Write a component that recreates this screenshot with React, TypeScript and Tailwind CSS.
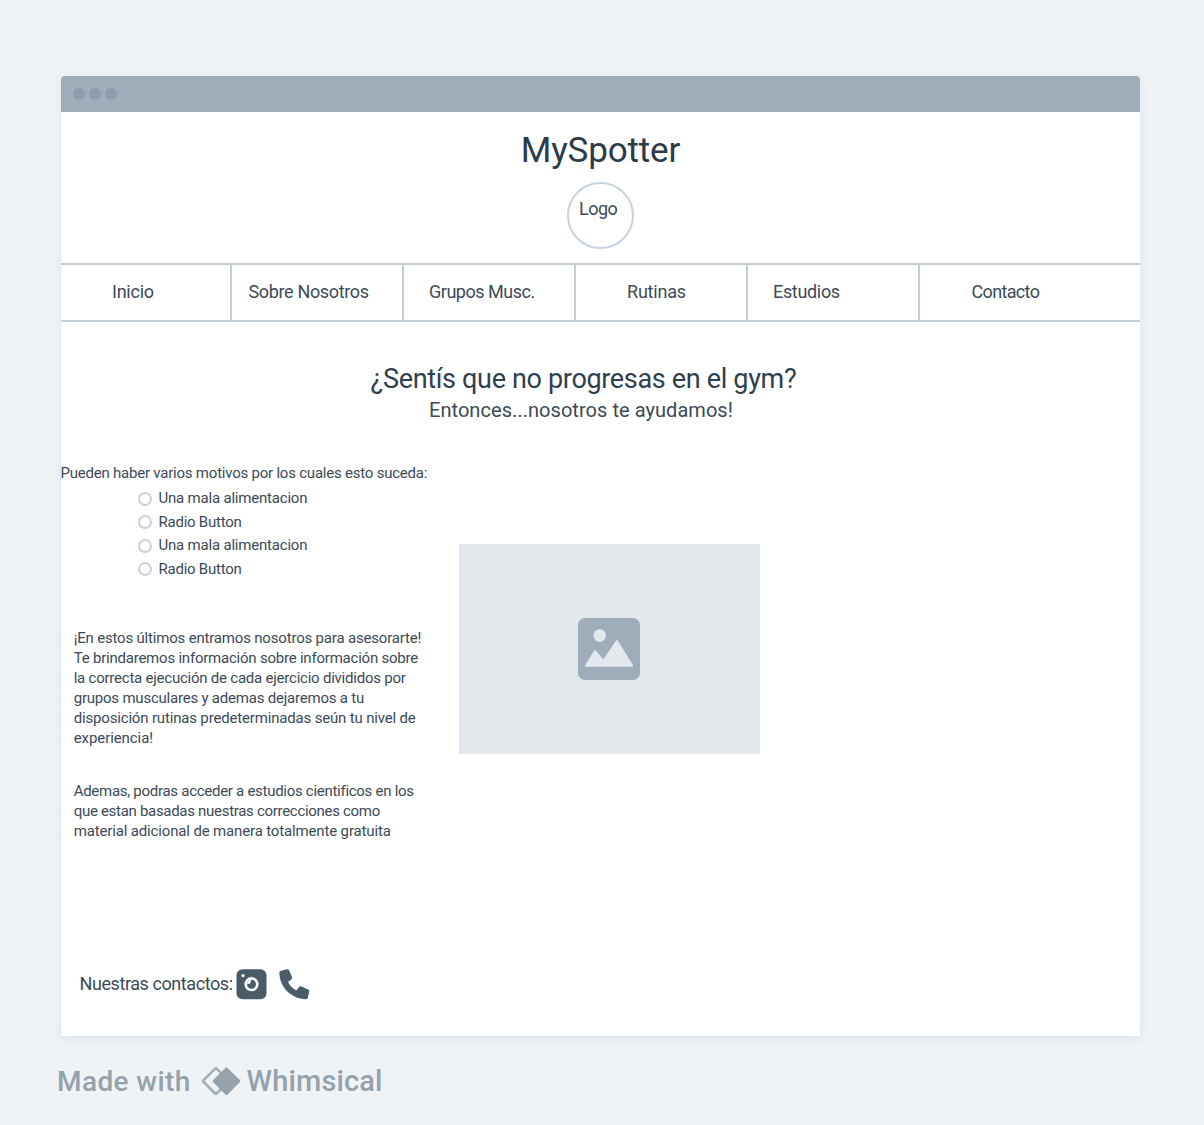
const navItems = [
  { label: "Inicio", cell: "w-[171px] border-r-2 pl-[51px] tracking-[-0.25px]" },
  { label: "Sobre Nosotros", cell: "w-[172px] border-r-2 pl-[16.5px] tracking-[-0.35px]" },
  { label: "Grupos Musc.", cell: "w-[172px] border-r-2 pl-[25px] tracking-[-0.48px]" },
  { label: "Rutinas", cell: "w-[172px] border-r-2 pl-[51px] tracking-[-0.2px]" },
  { label: "Estudios", cell: "w-[172px] border-r-2 pl-[25px] tracking-[-0.33px]" },
  { label: "Contacto", cell: "flex-1 pl-[51.5px] tracking-[-0.65px]" },
];

const reasons = [
  { label: "Una mala alimentacion", style: "h-[23px] tracking-[-0.2px]" },
  { label: "Radio Button", style: "h-6 tracking-[-0.24px]" },
  { label: "Una mala alimentacion", style: "h-[23px] tracking-[-0.2px]" },
  { label: "Radio Button", style: "h-6 tracking-[-0.24px]" },
];

const advice = [
  { text: "¡En estos últimos entramos nosotros para asesorarte!", tracking: "tracking-[-0.185px]" },
  { text: "Te brindaremos información sobre información sobre", tracking: "tracking-[-0.22px]" },
  { text: "la correcta ejecución de cada ejercicio divididos por", tracking: "tracking-[-0.23px]" },
  { text: "grupos musculares y ademas dejaremos a tu", tracking: "tracking-[-0.215px]" },
  { text: "disposición rutinas predeterminadas seún tu nivel de", tracking: "tracking-[-0.17px]" },
  { text: "experiencia!", tracking: "tracking-[-0.08px]" },
];

const studies = [
  { text: "Ademas, podras acceder a estudios cientificos en los", tracking: "tracking-[-0.28px]" },
  { text: "que estan basadas nuestras correcciones como", tracking: "tracking-[-0.3px]" },
  { text: "material adicional de manera totalmente gratuita", tracking: "tracking-[-0.15px]" },
];

function Lines({ lines }: { lines: { text: string; tracking: string }[] }) {
  return (
    <>
      {lines.map((line) => (
        <span key={line.text} className={`block whitespace-nowrap ${line.tracking}`}>
          {line.text}
        </span>
      ))}
    </>
  );
}

function PictureIcon() {
  return (
    <svg width="62" height="62" viewBox="0 0 62 62" aria-hidden="true">
      <rect width="62" height="62" rx="7" fill="#9eadb9" />
      <circle cx="21.7" cy="17.5" r="6.3" fill="#e3e8ec" />
      <path
        d="M7.2 47.3 15.8 33Q16.7 31.6 17.8 32.8L25.3 41.2 38 22.7Q39 21.5 40 22.7L55 47.3Q55.5 48.8 54 48.8H8Q6.6 48.8 7.2 47.3Z"
        fill="#e3e8ec"
      />
    </svg>
  );
}

function CameraIcon() {
  return (
    <svg width="31" height="31" viewBox="0 0 31 31" aria-hidden="true">
      <rect x=".5" y=".3" width="30" height="30" rx="6" fill="#4b5c69" />
      <circle cx="7" cy="6.6" r="1.6" fill="#fff" />
      <circle cx="15.5" cy="15.2" r="5.8" fill="none" stroke="#fff" strokeWidth="2.6" />
      <path d="M15.3 10.9A4.4 4.4 0 0 0 11.1 15.2Q14.8 15.5 15.3 10.9Z" fill="#fff" />
    </svg>
  );
}

function PhoneIcon() {
  return (
    <svg width="31" height="31" viewBox="0 0 31 31" aria-hidden="true">
      <path
        d="M1.8 1.7 8 .3Q9.6 0 10.2 1.4L13 7.9Q13.6 9.3 12.4 10.4L9 13.1Q11.8 18.6 17.3 21.5L20.1 18.1Q21.1 16.9 22.5 17.5L29.2 20.4Q30.6 21 30.3 22.5L28.9 28.6Q28.5 30.2 26.9 30.2C12.5 30.2.4 18.2.4 3.6Q.4 2 1.8 1.7Z"
        fill="#4b5c69"
      />
    </svg>
  );
}

function WhimsicalMark() {
  return (
    <svg width="41" height="31" viewBox="0 0 41 31" aria-hidden="true">
      <rect x="5.6" y="5.8" width="18.6" height="18.6" rx="1" transform="rotate(45 14.9 15.1)" fill="none" stroke="#a5b1ba" strokeWidth="2.7" />
      <rect x="15.3" y="5" width="20.4" height="20.4" rx="1.6" transform="rotate(45 25.5 15.2)" fill="#95a2ac" />
    </svg>
  );
}

export default function App() {
  return (
    <div className="h-[1125px] w-[1204px] overflow-hidden bg-[#eff3f6] pt-[76px] font-[Roboto,sans-serif] text-[#3c4a57]">
      <div className="ml-[61px] flex h-[960px] w-[1079px] flex-col rounded-t-[4px] bg-white shadow-[0_2px_10px_rgba(60,80,100,0.1)]">
        <div className="flex h-9 shrink-0 items-center gap-1 rounded-t-[4px] bg-[#9eadb9] pl-[11.5px]">
          <span className="size-3 rounded-full bg-[#8d9dab]" />
          <span className="size-3 rounded-full bg-[#8d9dab]" />
          <span className="size-3 rounded-full bg-[#8d9dab]" />
        </div>

        <header className="flex h-[151px] shrink-0 flex-col items-center pt-[19px]">
          <h1 className="h-10 text-[35px] leading-10 tracking-[-0.15px] text-[#2c3b49]">MySpotter</h1>
          <div className="mt-[11px] size-[67px] rounded-full border-2 border-[#c7d3de] pt-[13px] pl-[10px] text-lg leading-6 tracking-[-0.5px]">
            Logo
          </div>
        </header>

        <nav className="flex h-[59px] shrink-0 border-y-2 border-[#c3ced9] text-lg">
          {navItems.map((item) => (
            <a key={item.label} className={`flex items-center border-[#c3ced9] pb-0.5 whitespace-nowrap ${item.cell}`}>
              {item.label}
            </a>
          ))}
        </nav>

        <section className="pt-[41px]">
          <h2 className="pl-[309.5px] text-[27px] leading-8 tracking-[-0.33px] text-[#303f4d]">
            ¿Sentís que no progresas en el gym?
          </h2>
          <p className="-mt-px pl-[368px] text-xl leading-8 tracking-[0.05px]">Entonces...nosotros te ayudamos!</p>
        </section>

        <main className="flex h-[469px] shrink-0 pt-[35px] text-[15px]">
          <div className="w-[398.5px] shrink-0">
            <p className="-ml-[0.5px] leading-6 tracking-[-0.22px] whitespace-nowrap">
              Pueden haber varios motivos por los cuales esto suceda:
            </p>
            <ul className="mt-[2px] ml-[76.5px]">
              {reasons.map((reason, index) => (
                <li key={index} className={`flex items-center gap-[7px] ${reason.style}`}>
                  <span className="size-3.5 rounded-full border-2 border-[#c7d3de]" />
                  {reason.label}
                </li>
              ))}
            </ul>
            <p className="mt-[47px] ml-[12.7px] leading-5">
              <Lines lines={advice} />
            </p>
            <p className="mt-[33px] ml-[12.7px] leading-5">
              <Lines lines={studies} />
            </p>
          </div>
          <div className="mt-[83px] -ml-px flex h-[210px] w-[301px] items-center justify-center bg-[#e3e8ec]">
            <PictureIcon />
          </div>
        </main>

        <footer className="mt-[73px] flex h-8 items-center pl-[18.5px]">
          <span className="w-[156px] text-lg tracking-[-0.42px] whitespace-nowrap">Nuestras contactos:</span>
          <CameraIcon />
          <span className="ml-3">
            <PhoneIcon />
          </span>
        </footer>
      </div>

      <div className="mt-[29px] ml-[57px] flex h-8 items-center font-medium whitespace-nowrap text-[#95a2ac]">
        <span className="w-[143.5px] pt-0.5 text-[28px] tracking-[0.4px]">Made with</span>
        <WhimsicalMark />
        <span className="ml-[5px] pt-0.5 text-[29px] tracking-[0.15px]">Whimsical</span>
      </div>
    </div>
  );
}
